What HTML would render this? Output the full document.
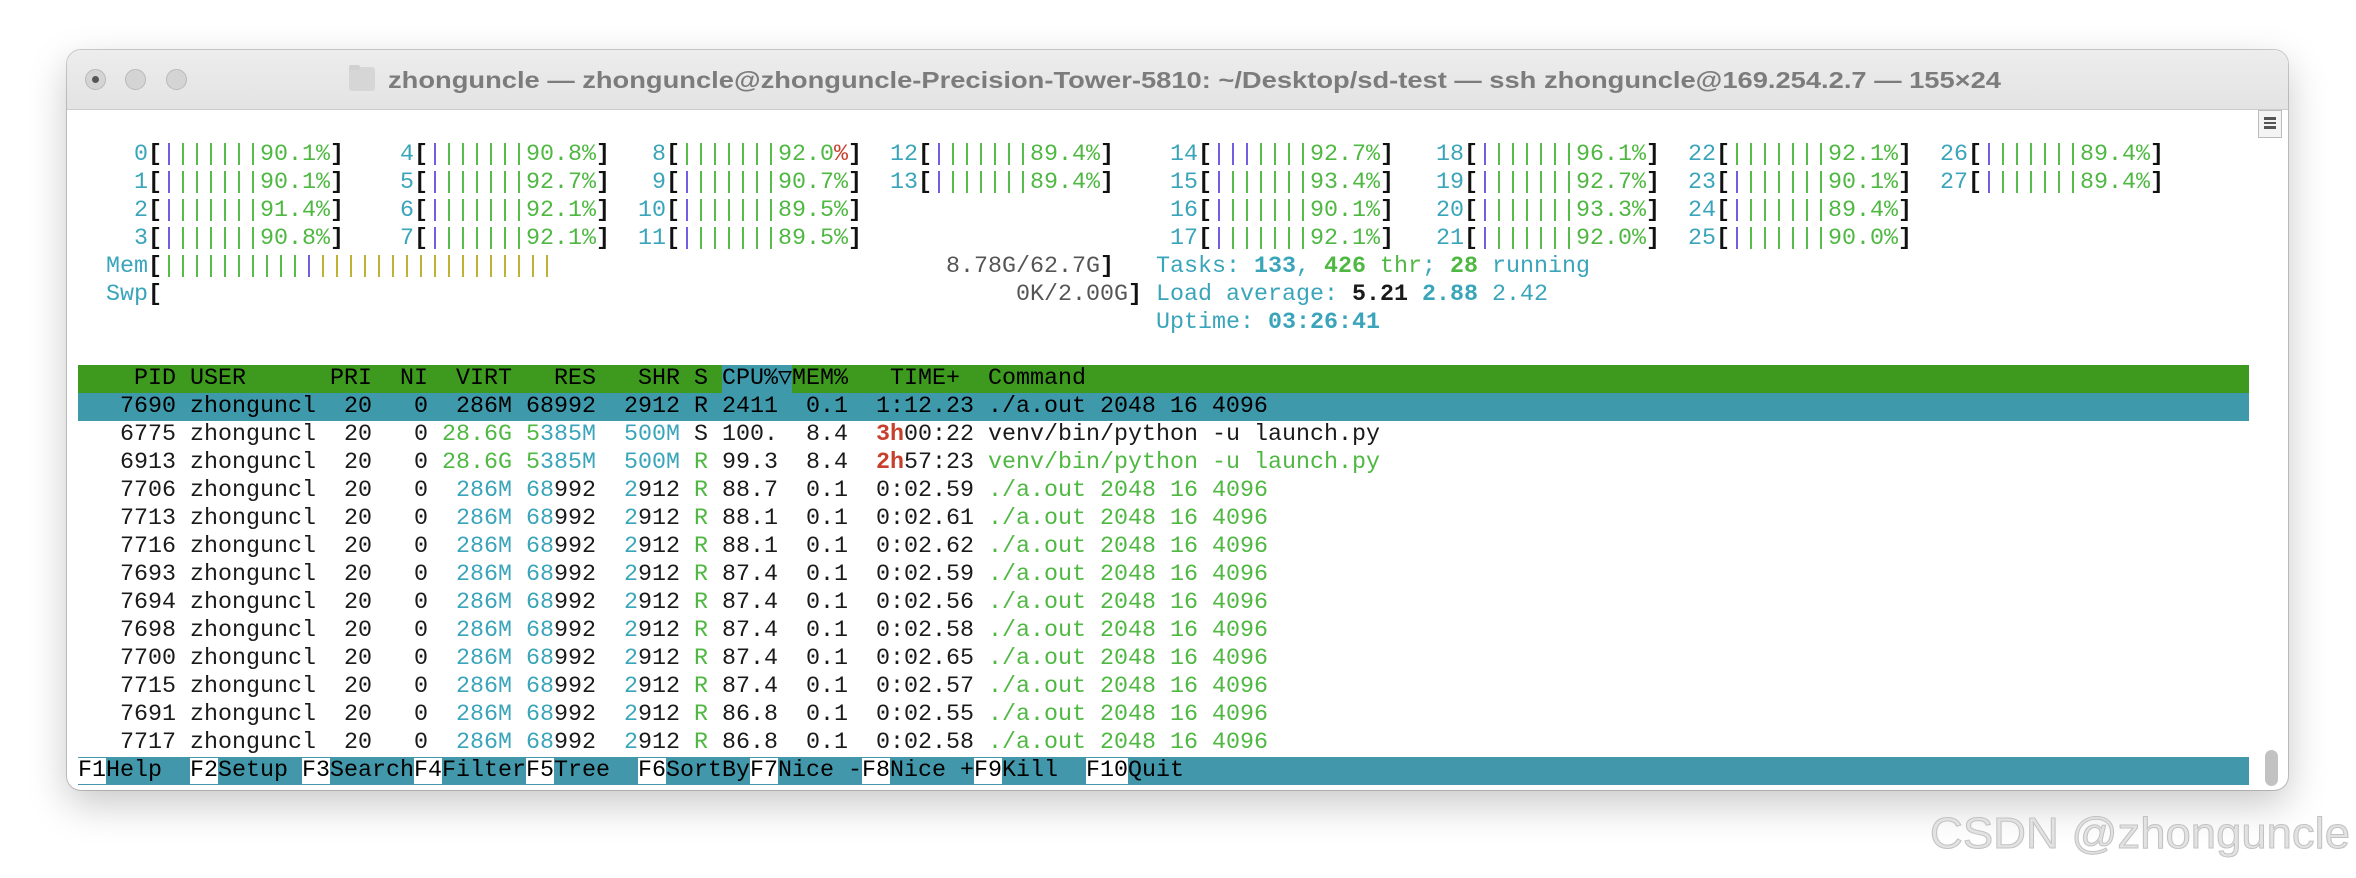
<!DOCTYPE html>
<html><head><meta charset="utf-8"><style>
body{margin:0;width:2356px;height:878px;background:#fff;position:relative;overflow:hidden;font-family:"Liberation Mono",monospace}
.win{position:absolute;left:67px;top:50px;width:2221px;height:740px;border-radius:14px;background:#fff;box-shadow:0 14px 40px rgba(0,0,0,.22),0 0 0 1px #cfcfcf;overflow:hidden}
.tb{position:absolute;left:0;top:0;width:100%;height:59px;background:linear-gradient(#ededed,#e3e3e3);border-bottom:1px solid #cdcdcd}
.dot{position:absolute;top:19px;width:21px;height:21px;border-radius:50%;background:#d4d4d4;border:1px solid #b9b9b9;box-sizing:border-box}
.t{position:absolute;white-space:pre;font-size:23.33px;line-height:28px;height:28px;color:#1a1a1a}
.c{color:#3aa5ba}.g{color:#4fb842}.p{color:#6a55e0}.y{color:#bcae2c}.r{color:#c8402d}.k{color:#111;font-weight:bold}
.bar{position:absolute;left:11px;width:2171px;height:28px}
</style></head><body>
<div class="win">
<div class="tb">
<div class="dot" style="left:18px"><div style="position:absolute;left:6px;top:6px;width:7px;height:7px;border-radius:50%;background:#555"></div></div>
<div class="dot" style="left:58px"></div>
<div class="dot" style="left:99px"></div>
<svg style="position:absolute;left:0;top:0" width="2221" height="59">
<rect x="282" y="17" width="26" height="24" rx="3" fill="#d6d6d6"/><rect x="282" y="15" width="11" height="5" rx="2" fill="#d0d0d0"/>
<text x="321" y="38" textLength="1613" lengthAdjust="spacingAndGlyphs" font-family="Liberation Sans, sans-serif" font-size="23" font-weight="bold" fill="#7c7c7c">zhonguncle — zhonguncle@zhonguncle-Precision-Tower-5810: ~/Desktop/sd-test — ssh zhonguncle@169.254.2.7 — 155×24</text>
</svg>
</div>
<div style="position:absolute;right:6px;top:60px;width:22px;height:26px;border:1px solid #bbb;background:#f4f4f4"><div style="margin:6px 5px;height:12px;border-top:3px solid #555;border-bottom:3px solid #555;box-sizing:border-box"><div style="margin-top:2px;border-top:2px solid #555"></div></div></div>
<div style="position:absolute;right:10px;top:700px;width:13px;height:36px;border-radius:7px;background:#c2c2c2"></div>

<div class="t" style="left:53px;top:91px"> <span class="c">0</span><span class="k">[</span><span class="p">|</span><span class="g">||||||90.1%</span><span class="k">]</span></div>
<div class="t" style="left:53px;top:119px"> <span class="c">1</span><span class="k">[</span><span class="p">|</span><span class="g">||||||90.1%</span><span class="k">]</span></div>
<div class="t" style="left:53px;top:147px"> <span class="c">2</span><span class="k">[</span><span class="p">|</span><span class="g">||||||91.4%</span><span class="k">]</span></div>
<div class="t" style="left:53px;top:175px"> <span class="c">3</span><span class="k">[</span><span class="p">|</span><span class="g">||||||90.8%</span><span class="k">]</span></div>

<div class="t" style="left:319px;top:91px"> <span class="c">4</span><span class="k">[</span><span class="p">|</span><span class="g">||||||90.8%</span><span class="k">]</span></div>
<div class="t" style="left:319px;top:119px"> <span class="c">5</span><span class="k">[</span><span class="p">|</span><span class="g">||||||92.7%</span><span class="k">]</span></div>
<div class="t" style="left:319px;top:147px"> <span class="c">6</span><span class="k">[</span><span class="p">|</span><span class="g">||||||92.1%</span><span class="k">]</span></div>
<div class="t" style="left:319px;top:175px"> <span class="c">7</span><span class="k">[</span><span class="p">|</span><span class="g">||||||92.1%</span><span class="k">]</span></div>

<div class="t" style="left:571px;top:91px"> <span class="c">8</span><span class="k">[</span><span class="g">|||||||92.0</span><span class="r">%</span><span class="k">]</span></div>
<div class="t" style="left:571px;top:119px"> <span class="c">9</span><span class="k">[</span><span class="p">|</span><span class="g">||||||90.7%</span><span class="k">]</span></div>
<div class="t" style="left:571px;top:147px"><span class="c">10</span><span class="k">[</span><span class="p">|</span><span class="g">||||||89.5%</span><span class="k">]</span></div>
<div class="t" style="left:571px;top:175px"><span class="c">11</span><span class="k">[</span><span class="p">|</span><span class="g">||||||89.5%</span><span class="k">]</span></div>

<div class="t" style="left:823px;top:91px"><span class="c">12</span><span class="k">[</span><span class="p">|</span><span class="g">||||||89.4%</span><span class="k">]</span></div>
<div class="t" style="left:823px;top:119px"><span class="c">13</span><span class="k">[</span><span class="p">|</span><span class="g">||||||89.4%</span><span class="k">]</span></div>

<div class="t" style="left:1103px;top:91px"><span class="c">14</span><span class="k">[</span><span class="p">|||</span><span class="g">||||92.7%</span><span class="k">]</span></div>
<div class="t" style="left:1103px;top:119px"><span class="c">15</span><span class="k">[</span><span class="p">|</span><span class="g">||||||93.4%</span><span class="k">]</span></div>
<div class="t" style="left:1103px;top:147px"><span class="c">16</span><span class="k">[</span><span class="p">|</span><span class="g">||||||90.1%</span><span class="k">]</span></div>
<div class="t" style="left:1103px;top:175px"><span class="c">17</span><span class="k">[</span><span class="p">|</span><span class="g">||||||92.1%</span><span class="k">]</span></div>

<div class="t" style="left:1369px;top:91px"><span class="c">18</span><span class="k">[</span><span class="p">|</span><span class="g">||||||96.1%</span><span class="k">]</span></div>
<div class="t" style="left:1369px;top:119px"><span class="c">19</span><span class="k">[</span><span class="p">|</span><span class="g">||||||92.7%</span><span class="k">]</span></div>
<div class="t" style="left:1369px;top:147px"><span class="c">20</span><span class="k">[</span><span class="p">|</span><span class="g">||||||93.3%</span><span class="k">]</span></div>
<div class="t" style="left:1369px;top:175px"><span class="c">21</span><span class="k">[</span><span class="p">|</span><span class="g">||||||92.0%</span><span class="k">]</span></div>

<div class="t" style="left:1621px;top:91px"><span class="c">22</span><span class="k">[</span><span class="g">|||||||92.1%</span><span class="k">]</span></div>
<div class="t" style="left:1621px;top:119px"><span class="c">23</span><span class="k">[</span><span class="p">|</span><span class="g">||||||90.1%</span><span class="k">]</span></div>
<div class="t" style="left:1621px;top:147px"><span class="c">24</span><span class="k">[</span><span class="p">|</span><span class="g">||||||89.4%</span><span class="k">]</span></div>
<div class="t" style="left:1621px;top:175px"><span class="c">25</span><span class="k">[</span><span class="p">|</span><span class="g">||||||90.0%</span><span class="k">]</span></div>

<div class="t" style="left:1873px;top:91px"><span class="c">26</span><span class="k">[</span><span class="p">|</span><span class="g">||||||89.4%</span><span class="k">]</span></div>
<div class="t" style="left:1873px;top:119px"><span class="c">27</span><span class="k">[</span><span class="p">|</span><span class="g">||||||89.4%</span><span class="k">]</span></div>

<div class="t" style="left:39px;top:203px"><span class="c">Mem</span><span class="k">[</span><span class="g">||||||||||</span><span class="p">|</span><span class="y">|||||||||||||||||</span></div>
<div class="t" style="left:879px;top:203px"><span style="color:#555">8.78G/62.7G</span><span class="k">]</span></div>
<div class="t" style="left:39px;top:231px"><span class="c">Swp</span><span class="k">[</span></div>
<div class="t" style="left:949px;top:231px"><span style="color:#555">0K/2.00G</span><span class="k">]</span></div>
<div class="t" style="left:1089px;top:203px"><span class="c">Tasks: </span><span class="c" style="font-weight:bold">133</span><span class="c">, </span><span class="g" style="font-weight:bold">426</span><span class="g"> thr</span><span class="c">; </span><span class="g" style="font-weight:bold">28</span><span class="c"> running</span></div>
<div class="t" style="left:1089px;top:231px"><span class="c">Load average: </span><b>5.21</b> <span class="c" style="font-weight:bold">2.88</span> <span class="c">2.42</span></div>
<div class="t" style="left:1089px;top:259px"><span class="c">Uptime: </span><span class="c" style="font-weight:bold">03:26:41</span></div>

<div class="bar" style="top:315px;background:#3d9a1f"></div>
<div style="position:absolute;left:655px;top:315px;width:70px;height:28px;background:#3e99ab"></div>
<div class="t" style="left:11px;top:315px;color:#000">    PID USER      PRI  NI  VIRT   RES   SHR S CPU%▽MEM%   TIME+  Command</div>
<div class="bar" style="top:343px;background:#3e99ab"></div>
<div class="t" style="left:11px;top:343px;color:#000">   7690 zhonguncl  20   0  286M 68992  2912 R 2411  0.1  1:12.23 ./a.out 2048 16 4096</div>
<div class="t" style="left:11px;top:371px">   6775 zhonguncl  20   0 <span class="g">28.6G 5</span><span class="c">385M  500M</span> S 100.  8.4  <span class="r" style="font-weight:bold">3h</span>00:22 venv/bin/python -u launch.py</div>
<div class="t" style="left:11px;top:399px">   6913 zhonguncl  20   0 <span class="g">28.6G 5</span><span class="c">385M  500M</span> <span class="g">R</span> 99.3  8.4  <span class="r" style="font-weight:bold">2h</span>57:23 <span class="g">venv/bin/python -u launch.py</span></div>
<div class="t" style="left:11px;top:427px">   7706 zhonguncl  20   0 <span class="c"> 286M 68</span>992  <span class="c">2</span>912 <span class="g">R</span> 88.7  0.1  0:02.59 <span class="g">./a.out 2048 16 4096</span></div>
<div class="t" style="left:11px;top:455px">   7713 zhonguncl  20   0 <span class="c"> 286M 68</span>992  <span class="c">2</span>912 <span class="g">R</span> 88.1  0.1  0:02.61 <span class="g">./a.out 2048 16 4096</span></div>
<div class="t" style="left:11px;top:483px">   7716 zhonguncl  20   0 <span class="c"> 286M 68</span>992  <span class="c">2</span>912 <span class="g">R</span> 88.1  0.1  0:02.62 <span class="g">./a.out 2048 16 4096</span></div>
<div class="t" style="left:11px;top:511px">   7693 zhonguncl  20   0 <span class="c"> 286M 68</span>992  <span class="c">2</span>912 <span class="g">R</span> 87.4  0.1  0:02.59 <span class="g">./a.out 2048 16 4096</span></div>
<div class="t" style="left:11px;top:539px">   7694 zhonguncl  20   0 <span class="c"> 286M 68</span>992  <span class="c">2</span>912 <span class="g">R</span> 87.4  0.1  0:02.56 <span class="g">./a.out 2048 16 4096</span></div>
<div class="t" style="left:11px;top:567px">   7698 zhonguncl  20   0 <span class="c"> 286M 68</span>992  <span class="c">2</span>912 <span class="g">R</span> 87.4  0.1  0:02.58 <span class="g">./a.out 2048 16 4096</span></div>
<div class="t" style="left:11px;top:595px">   7700 zhonguncl  20   0 <span class="c"> 286M 68</span>992  <span class="c">2</span>912 <span class="g">R</span> 87.4  0.1  0:02.65 <span class="g">./a.out 2048 16 4096</span></div>
<div class="t" style="left:11px;top:623px">   7715 zhonguncl  20   0 <span class="c"> 286M 68</span>992  <span class="c">2</span>912 <span class="g">R</span> 87.4  0.1  0:02.57 <span class="g">./a.out 2048 16 4096</span></div>
<div class="t" style="left:11px;top:651px">   7691 zhonguncl  20   0 <span class="c"> 286M 68</span>992  <span class="c">2</span>912 <span class="g">R</span> 86.8  0.1  0:02.55 <span class="g">./a.out 2048 16 4096</span></div>
<div class="t" style="left:11px;top:679px">   7717 zhonguncl  20   0 <span class="c"> 286M 68</span>992  <span class="c">2</span>912 <span class="g">R</span> 86.8  0.1  0:02.58 <span class="g">./a.out 2048 16 4096</span></div>

<div class="bar" style="top:707px;background:#4298aa"></div>
<div class="t" style="left:11px;top:707px;color:#000"><span style="background:#fff">F1</span>Help  <span style="background:#fff">F2</span>Setup <span style="background:#fff">F3</span>Search<span style="background:#fff">F4</span>Filter<span style="background:#fff">F5</span>Tree  <span style="background:#fff">F6</span>SortBy<span style="background:#fff">F7</span>Nice -<span style="background:#fff">F8</span>Nice +<span style="background:#fff">F9</span>Kill  <span style="background:#fff">F10</span>Quit</div>
</div>
<svg style="position:absolute;left:0;top:0" width="2356" height="878"><text x="1930" y="848" textLength="420" lengthAdjust="spacingAndGlyphs" font-family="Liberation Sans, sans-serif" font-size="44" fill="#e2e2e2" stroke="#c2c2c2" stroke-width="1">CSDN @zhonguncle</text></svg>
</body></html>
